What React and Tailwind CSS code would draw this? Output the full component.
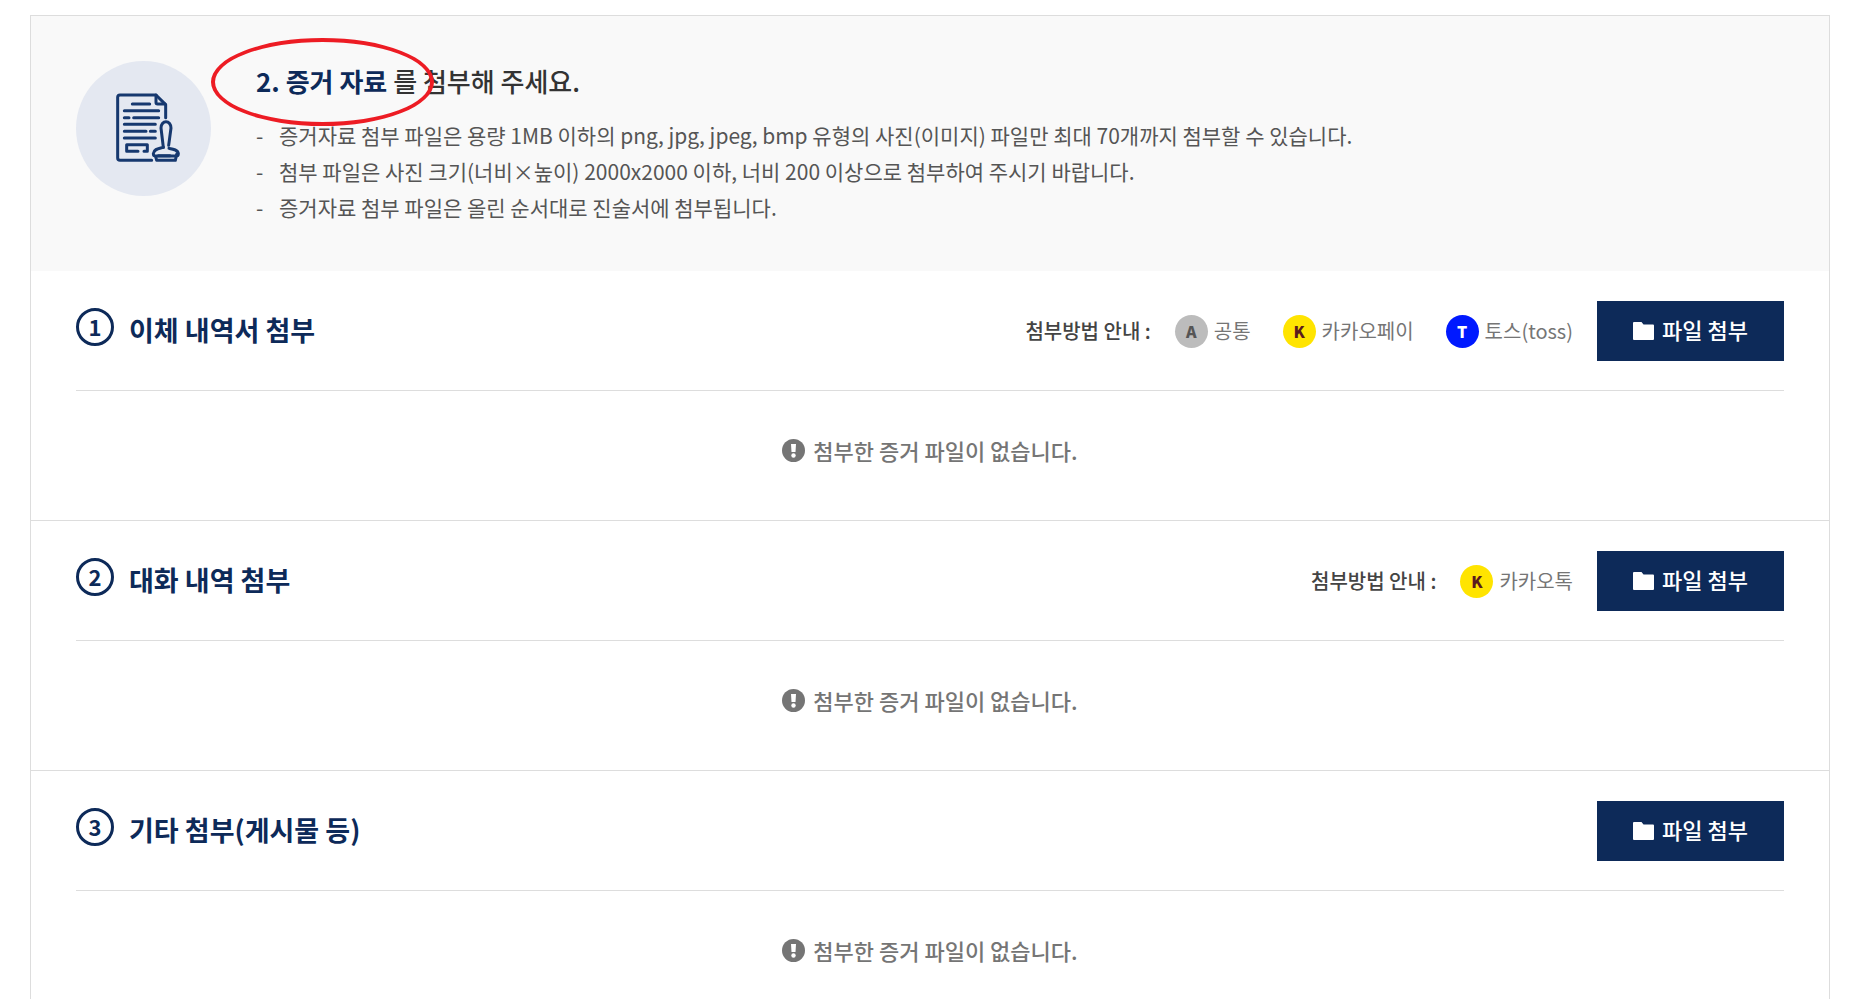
import React from 'react'

const notices = [
  '증거자료 첨부 파일은 용량 1MB 이하의 png, jpg, jpeg, bmp 유형의 사진(이미지) 파일만 최대 70개까지 첨부할 수 있습니다.',
  '첨부 파일은 사진 크기(너비×높이) 2000x2000 이하, 너비 200 이상으로 첨부하여 주시기 바랍니다.',
  '증거자료 첨부 파일은 올린 순서대로 진술서에 첨부됩니다.',
]

const sections = [
  {
    title: '이체 내역서 첨부',
    guides: [
      { mark: 'A', label: '공통', color: 'bg-[#bcbcbc] text-[#555555]' },
      { mark: 'K', label: '카카오페이', color: 'bg-[#ffe400] text-[#5a1a1e]' },
      { mark: 'T', label: '토스(toss)', color: 'bg-[#0019ff] text-white' },
    ],
  },
  {
    title: '대화 내역 첨부',
    guides: [{ mark: 'K', label: '카카오톡', color: 'bg-[#ffe400] text-[#5a1a1e]' }],
  },
  { title: '기타 첨부(게시물 등)', guides: [] },
]

function DocumentStampIcon() {
  return (
    <svg
      viewBox="0 0 405 405"
      className="w-[135px] h-[135px] shrink-0"
      fill="none"
      stroke="#16386f"
      strokeWidth="9"
      strokeLinecap="round"
      strokeLinejoin="round"
      aria-hidden="true"
    >
      <circle cx="202.5" cy="202.5" r="202.5" fill="#e4e8f1" stroke="none" />
      {/* page with folded corner */}
      <path d="M227 298H132a7 7 0 0 1-7-7V109a7 7 0 0 1 7-7h108l29 29v39" />
      <path d="M240 102v22a5 5 0 0 0 5 5h22" />
      {/* text lines */}
      <path d="M169 129h52M145 149h103M145 170h14M173 170h75M145 190h93M145 211h65M223 211h15M145 231h93" />
      <path d="M186 271H152v-20h62v20h-10" />
      {/* stamp */}
      <path d="M262 259l-7-58a15 19 0 0 1 30 0l-7 52" />
      <path d="M262 259c-13 4-28 4-30 19 0 5 3 7 8 7h59c5 0 8-2 8-7-1-12-16-14-28-16" />
      <path d="M239 287l3 11h56l4-18M247 284h35" />
    </svg>
  )
}

function FolderIcon() {
  return (
    <svg viewBox="0 0 21 18" className="w-[21px] h-[18px]" fill="currentColor" aria-hidden="true">
      <path d="M1 0h7.500L10.500 2.500H20a1 1 0 0 1 1 1V17a1 1 0 0 1-1 1H1a1 1 0 0 1-1-1V1a1 1 0 0 1 1-1z" />
    </svg>
  )
}

function NoticeIcon() {
  return (
    <svg viewBox="0 0 23 23" className="w-[23px] h-[23px]" aria-hidden="true">
      <circle cx="11.500" cy="11.500" r="11.500" fill="#757575" />
      <path d="M9 5h5l-.5 8h-4z" fill="#fff" />
      <circle cx="11.500" cy="16.500" r="2.200" fill="#fff" />
    </svg>
  )
}

function AttachSection({ number, title, guides }) {
  return (
    <section className="border-b border-[#dddddd]">
      <div className="mx-[45px] pt-[30px] pb-[29px] flex items-center justify-between border-b border-[#dddddd]">
        <div className="flex items-start gap-[15px] text-[#0d2a59]">
          <span className="w-[38px] h-[38px] rounded-full border-3 border-[#0d2a59] pb-[3px] flex items-center justify-center text-[22px] leading-8 font-bold">
            {number}
          </span>
          <h2 className="pb-[2px] text-[27px] leading-[44px] font-bold">{title}</h2>
        </div>
        <div className="flex items-center gap-6">
          {guides.length > 0 && (
            <>
              <span className="pb-px text-xl font-medium text-[#444444]">첨부방법 안내 :</span>
              <div className="flex items-center gap-8">
                {guides.map((guide) => (
                  <button key={guide.label} type="button" className="flex items-center gap-[6px]">
                    <span className={`w-[33px] h-[33px] pb-px rounded-full flex items-center justify-center text-base font-black ${guide.color}`}>
                      {guide.mark}
                    </span>
                    <span className="text-xl text-[#757575]">{guide.label}</span>
                  </button>
                ))}
              </div>
            </>
          )}
          <button type="button" className="w-[187px] h-[60px] bg-[#0d2a59] text-white text-[22px] font-medium flex items-center justify-center gap-2">
            <FolderIcon />
            <span className="pb-[3px]">파일 첨부</span>
          </button>
        </div>
      </div>
      <div className="pt-[39px] pb-[49px] flex items-center justify-center gap-2 text-[22px] leading-[41px] font-medium text-[#757575]">
        <NoticeIcon />
        <p>첨부한 증거 파일이 없습니다.</p>
      </div>
    </section>
  )
}

export default function App() {
  return (
    <div className="h-screen overflow-hidden bg-white px-[30px] pt-[15px] font-['Noto_Sans_CJK_KR',sans-serif]">
      <main className="border border-[#dddddd]">
        <header className="bg-[#f9f9f9] px-[45px] pt-[45px] pb-[46px] flex items-start gap-[45px]">
          <DocumentStampIcon />
          <div>
            <h1 className="relative text-[26px] leading-10 font-medium text-[#333333]">
              <strong className="font-bold text-[#0d2a59]">2. 증거 자료</strong> 를 첨부해 주세요.
              <span className="absolute -left-[45px] -top-[23px] w-[223px] h-[88px] rounded-[50%] border-4 border-[#ed1c24]" />
            </h1>
            <ul className="mt-4 text-[21px] leading-9 text-[#555555]">
              {notices.map((notice) => (
                <li key={notice} className="flex">
                  <span className="w-[23px] shrink-0">-</span>
                  {notice}
                </li>
              ))}
            </ul>
          </div>
        </header>
        {sections.map((section, index) => (
          <AttachSection key={section.title} number={index + 1} {...section} />
        ))}
      </main>
    </div>
  )
}
